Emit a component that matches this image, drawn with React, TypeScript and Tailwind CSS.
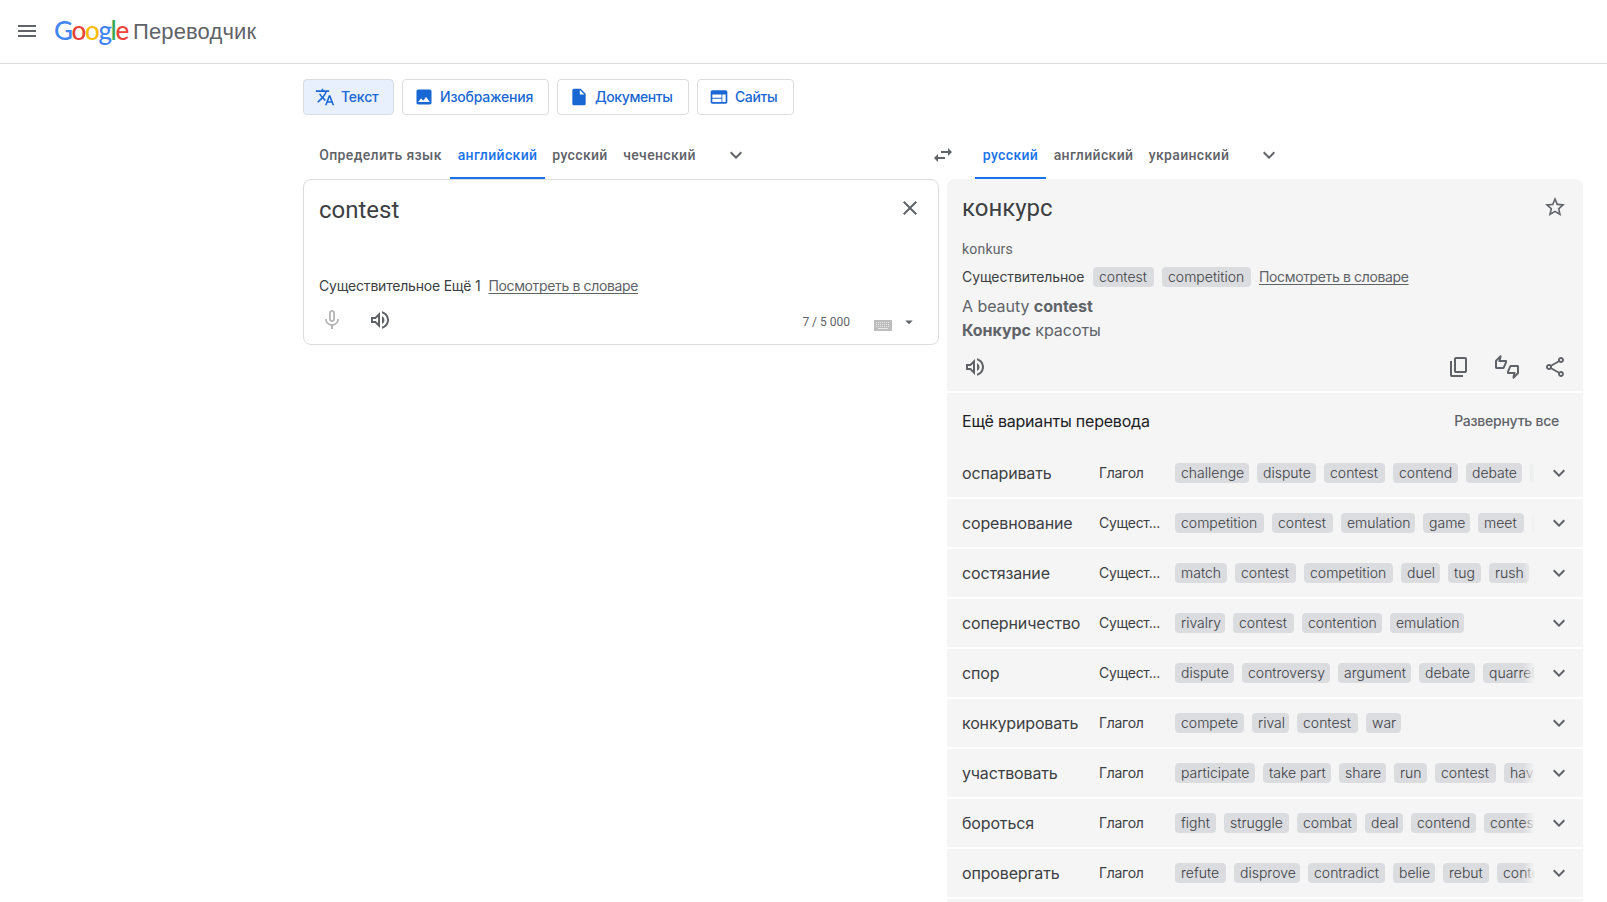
import React from 'react';
import {
  MdMenu,
  MdTranslate,
  MdImage,
  MdInsertDriveFile,
  MdWeb,
  MdExpandMore,
  MdSwapHoriz,
  MdClose,
  MdMicNone,
  MdOutlineVolumeUp,
  MdArrowDropDown,
  MdStarBorder,
  MdOutlineThumbsUpDown,
  MdOutlineShare,
} from 'react-icons/md';

// word -> chip width
const chipWidths: Record<string, string> = {
  challenge: 'w-[74px]',
  dispute: 'w-[59px]',
  contest: 'w-[61px]',
  contend: 'w-[65px]',
  debate: 'w-[56px]',
  competition: 'w-[89px]',
  emulation: 'w-[74px]',
  game: 'w-[47px]',
  meet: 'w-[46px]',
  match: 'w-[52px]',
  duel: 'w-[39px]',
  tug: 'w-[33px]',
  rush: 'w-[40px]',
  rivalry: 'w-[50px]',
  contention: 'w-[80px]',
  controversy: 'w-[88px]',
  argument: 'w-[73px]',
  quarrel: 'w-[56px]',
  compete: 'w-[69px]',
  rival: 'w-[37px]',
  war: 'w-[35px]',
  participate: 'w-[80px]',
  'take part': 'w-[68px]',
  share: 'w-[47px]',
  run: 'w-[33px]',
  have: 'w-[46px]',
  fight: 'w-[41px]',
  struggle: 'w-[65px]',
  combat: 'w-[60px]',
  deal: 'w-[38px]',
  refute: 'w-[51px]',
  disprove: 'w-[66px]',
  contradict: 'w-[77px]',
  belie: 'w-[42px]',
  rebut: 'w-[46px]',
};

const variants = [
  { word: 'оспаривать', part: 'Глагол', chips: ['challenge', 'dispute', 'contest', 'contend', 'debate', ''] },
  { word: 'соревнование', part: 'Сущест...', chips: ['competition', 'contest', 'emulation', 'game', 'meet', ''] },
  { word: 'состязание', part: 'Сущест...', chips: ['match', 'contest', 'competition', 'duel', 'tug', 'rush'] },
  { word: 'соперничество', part: 'Сущест...', chips: ['rivalry', 'contest', 'contention', 'emulation'] },
  { word: 'спор', part: 'Сущест...', chips: ['dispute', 'controversy', 'argument', 'debate', 'quarrel'] },
  { word: 'конкурировать', part: 'Глагол', chips: ['compete', 'rival', 'contest', 'war'] },
  { word: 'участвовать', part: 'Глагол', chips: ['participate', 'take part', 'share', 'run', 'contest', 'have'] },
  { word: 'бороться', part: 'Глагол', chips: ['fight', 'struggle', 'combat', 'deal', 'contend', 'contest'] },
  { word: 'опровергать', part: 'Глагол', chips: ['refute', 'disprove', 'contradict', 'belie', 'rebut', 'contest'] },
];

function Chip({ text }: { text: string }) {
  return (
    <span
      className={`flex h-5 shrink-0 items-center whitespace-nowrap rounded bg-[#dadce0] pl-1.5 text-sm font-light text-[#3c4043] ${chipWidths[text] ?? 'w-12'}`}
    >
      {text}
    </span>
  );
}

function LangTab({ label, active, className }: { label: string; active?: boolean; className: string }) {
  return (
    <button
      className={`flex h-12 shrink-0 items-center justify-center whitespace-nowrap border-b-2 pt-0.5 font-[Roboto] text-sm font-medium tracking-[0.35px] ${
        active ? 'border-[#1a73e8] text-[#1a73e8]' : 'border-transparent text-[#5f6368]'
      } ${className}`}
    >
      {label}
    </button>
  );
}

function DictionaryLink() {
  return (
    <a className="ml-2 tracking-[-0.36px] text-[#5f6368] underline underline-offset-2 [text-decoration-skip-ink:none]">
      Посмотреть в словаре
    </a>
  );
}

function CopyIcon() {
  return (
    <svg viewBox="0 -960 960 960" className="size-6" fill="currentColor">
      <path d="M360-240q-33 0-56.5-23.5T280-320v-480q0-33 23.5-56.5T360-880h360q33 0 56.5 23.5T800-800v480q0 33-23.5 56.5T720-240H360Zm0-80h360v-480H360v480ZM200-80q-33 0-56.5-23.5T120-160v-560h80v560h440v80H200Z" />
    </svg>
  );
}

function KeyboardIcon() {
  return (
    <svg width="18" height="11" viewBox="0 0 18 11">
      <rect width="18" height="11" fill="#bdbdbd" />
      <path d="M2 2.5h14M2 4.5h14M2 6.5h14" stroke="#e8e8e8" strokeDasharray="1 1" />
      <path d="M4 8.5h10" stroke="#e8e8e8" />
    </svg>
  );
}

function Header() {
  return (
    <header className="flex h-16 items-center border-b border-[#dadce0] pl-[15px]">
      <MdMenu className="mb-0.5 size-6 text-[#5f6368]" />
      <div className="mb-1 ml-[15px] flex w-[74px] font-[Lato] text-[26px] font-medium leading-none tracking-[-1.4px]">
        <span className="text-[#4285f4]">G</span>
        <span className="text-[#ea4335]">o</span>
        <span className="text-[#fbbc05]">o</span>
        <span className="text-[#4285f4]">g</span>
        <span className="text-[#34a853]">l</span>
        <span className="text-[#ea4335]">e</span>
      </div>
      <span className="ml-[5px] font-['Liberation_Sans'] text-[22px] leading-6 tracking-[0.12px] text-[#5f6368]">
        Переводчик
      </span>
    </header>
  );
}

function Modes() {
  const base =
    'flex h-9 items-center rounded border border-[#dadce0] pl-[11px] text-sm font-medium text-[#1967d2] whitespace-nowrap';
  return (
    <nav className="flex gap-2 pl-[303px] pt-[15px]">
      <button className={`${base} w-[91px] bg-[#e8f0fe] tracking-[-0.2px]`}>
        <MdTranslate className="mr-1.5 size-5" />
        Текст
      </button>
      <button className={`${base} w-[147px] tracking-[-0.2px]`}>
        <MdImage className="mr-1.5 size-5" />
        Изображения
      </button>
      <button className={`${base} w-[132px] tracking-[-0.4px]`}>
        <MdInsertDriveFile className="mr-1.5 size-5" />
        Документы
      </button>
      <button className={`${base} w-[97px] tracking-[-0.4px]`}>
        <MdWeb className="mr-1.5 size-5" />
        Сайты
      </button>
    </nav>
  );
}

function SourcePanel() {
  return (
    <div className="flex h-[166px] w-[636px] flex-col rounded-lg border border-[#dadce0]">
      <div className="flex justify-between pl-[15px] pr-4 pt-3">
        <div className="font-[Roboto] text-2xl leading-9 text-[#3c4043]">contest</div>
        <MdClose className="mt-1 size-6 text-[#5f6368]" />
      </div>
      <div className="mt-12 flex items-center pl-[15px] text-sm leading-5 text-[#3c4043]">
        <span className="tracking-[-0.2px]">Существительное Ещё 1</span>
        <DictionaryLink />
      </div>
      <div className="mt-1 flex h-10 items-center pl-4 text-[#5f6368]">
        <MdMicNone className="size-6 text-[#b4b4b4]" />
        <MdOutlineVolumeUp className="ml-6 size-6" />
        <span className="ml-auto mt-1 font-[Roboto] text-xs">7 / 5 000</span>
        <div className="ml-6 mt-[11px]">
          <KeyboardIcon />
        </div>
        <MdArrowDropDown className="ml-2 mr-5 mt-1 size-[18px]" />
      </div>
    </div>
  );
}

function ResultPanel() {
  return (
    <div className="h-[212px] rounded-t-lg bg-[#f5f5f5] pl-[15px] pr-4 text-[#5f6368]">
      <div className="flex justify-between pt-[11px]">
        <div className="font-[Roboto] text-2xl leading-9 text-[#3c4043]">конкурс</div>
        <MdStarBorder className="mt-[5px] size-6" />
      </div>
      <div className="mt-[13px] font-[Roboto] text-sm leading-5 tracking-[0.2px]">konkurs</div>
      <div className="mt-2 flex h-5 items-center text-sm">
        <span className="w-[131px] tracking-[-0.1px] text-[#3c4043]">Существительное</span>
        <div className="flex gap-2">
          <Chip text="contest" />
          <Chip text="competition" />
        </div>
        <DictionaryLink />
      </div>
      <div className="mt-[7px] text-base leading-6 tracking-[-0.05px]">
        <div>
          A beauty <b>contest</b>
        </div>
        <div>
          <b>Конкурс</b> красоты
        </div>
      </div>
      <div className="mt-[13px] flex items-center pl-px">
        <MdOutlineVolumeUp className="size-6" />
        <div className="ml-auto flex items-center gap-6">
          <CopyIcon />
          <MdOutlineThumbsUpDown className="size-6" />
          <MdOutlineShare className="size-6" />
        </div>
      </div>
    </div>
  );
}

function Variants() {
  return (
    <div className="mt-0.5">
      <div className="flex h-14 items-center justify-between bg-[#f5f5f5] pl-[15px] pr-6">
        <h2 className="text-base tracking-[-0.2px] text-[#202124]">Ещё варианты перевода</h2>
        <button className="text-sm font-medium tracking-[-0.25px] text-[#5f6368]">Развернуть все</button>
      </div>
      <div className="flex flex-col gap-0.5">
        {variants.map((v) => (
          <div key={v.word} className="flex h-12 items-center bg-[#f5f5f5] pl-[15px] pr-3">
            <div className="w-[137px] shrink-0 text-base tracking-[-0.15px] text-[#3c4043]">{v.word}</div>
            <div className="mr-3 w-16 shrink-0 whitespace-nowrap text-sm tracking-[-0.3px] text-[#3c4043]">
              {v.part}
            </div>
            <div className="relative flex w-[360px] gap-2 overflow-hidden">
              {v.chips.map((chip) => (
                <Chip key={chip} text={chip} />
              ))}
              <div className="absolute inset-y-0 right-0 w-3 bg-linear-to-r from-transparent to-[#f5f5f5]" />
            </div>
            <MdExpandMore className="mb-px ml-auto size-6 text-[#5f6368]" />
          </div>
        ))}
        <div className="h-12 bg-[#f5f5f5]" />
      </div>
    </div>
  );
}

export default function App() {
  return (
    <div className="h-[902px] overflow-hidden bg-white font-[Inter]">
      <Header />
      <Modes />
      <div className="mt-4 flex h-12 items-center pl-[303px]">
        <LangTab label="Определить язык" className="ml-2 w-[139px]" />
        <LangTab label="английский" active className="w-[95px]" />
        <LangTab label="русский" className="w-[70px]" />
        <LangTab label="чеченский" className="w-[89px]" />
        <MdExpandMore className="ml-5 size-6 text-[#5f6368]" />
        <MdSwapHoriz className="ml-auto size-6 text-[#5f6368]" />
        <div className="flex w-[652px] items-center">
          <LangTab label="русский" active className="ml-5 w-[71px]" />
          <LangTab label="английский" className="w-[95px]" />
          <LangTab label="украинский" className="w-[96px]" />
          <MdExpandMore className="ml-5 size-6 text-[#5f6368]" />
        </div>
      </div>
      <div className="flex items-start gap-2 pl-[303px]">
        <SourcePanel />
        <div className="w-[636px]">
          <ResultPanel />
          <Variants />
        </div>
      </div>
    </div>
  );
}
